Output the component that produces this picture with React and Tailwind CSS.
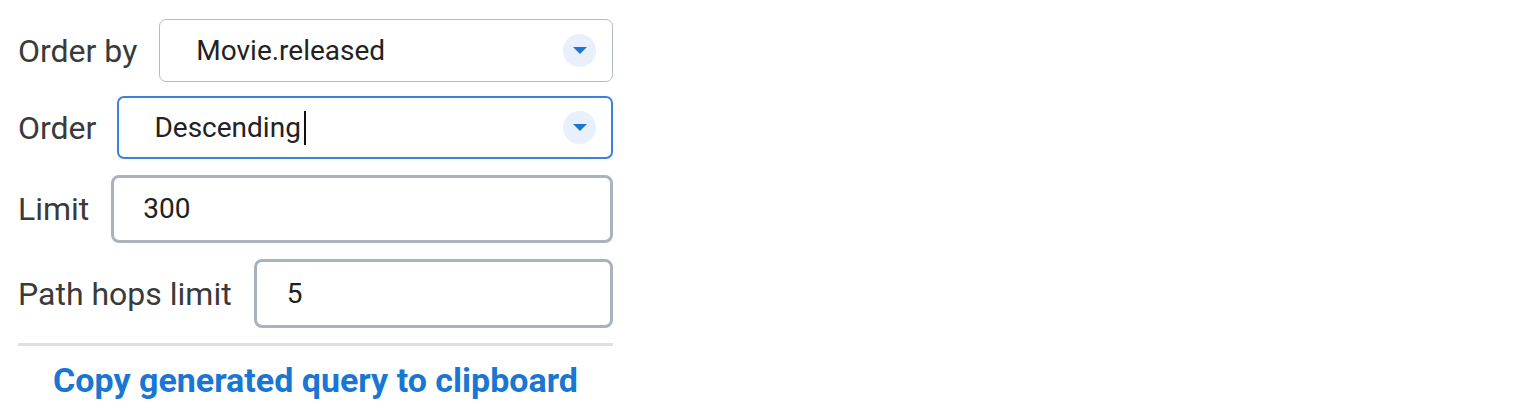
import React from "react";

function Caret() {
  return (
    <span className="flex h-[33px] w-[33px] shrink-0 items-center justify-center rounded-full bg-[#e8f0fb]">
      <svg width="14" height="7" viewBox="0 0 14 7">
        <path d="M0 0 L14 0 L7 7 Z" fill="#1976d2" />
      </svg>
    </span>
  );
}

export default function App() {
  const font = { fontFamily: "Roboto, 'Liberation Sans', sans-serif" };
  return (
    <div className="min-h-[414px] w-[1530px] bg-white" style={font}>
      <div className="flex w-[613px] flex-col pl-[18px] pt-[19px]">
        <div className="flex items-center gap-[22px]">
          <span className="text-[32px] leading-none text-[#3a3a3a]">Order by</span>
          <div className="flex h-[63px] flex-1 items-center justify-between rounded-[7px] border border-[#b4bcc6] pl-[36px] pr-[16px]">
            <span className="text-[28px] text-[#222]">Movie.released</span>
            <Caret />
          </div>
        </div>
        <div className="mt-[14px] flex items-center gap-[21px]">
          <span className="text-[32px] leading-none text-[#3a3a3a]">Order</span>
          <div className="flex h-[63px] flex-1 items-center justify-between rounded-[7px] border-2 border-[#3b82e0] pl-[35px] pr-[15px]">
            <span className="flex items-center text-[28px] text-[#222]">
              Descending
              <span className="ml-[3px] inline-block h-[34px] w-[2px] bg-[#111]" />
            </span>
            <Caret />
          </div>
        </div>
        <div className="mt-[16px] flex items-center gap-[22px]">
          <span className="text-[32px] leading-none text-[#3a3a3a]">Limit</span>
          <div className="flex h-[68px] flex-1 items-center rounded-[8px] border-[3px] border-[#a9b3be] pl-[29px]">
            <span className="text-[28px] text-[#222]">300</span>
          </div>
        </div>
        <div className="mt-[16px] flex items-center gap-[22px]">
          <span className="text-[32px] leading-none text-[#3a3a3a]">Path hops limit</span>
          <div className="flex h-[69px] flex-1 items-center rounded-[8px] border-[3px] border-[#a9b3be] pl-[30px]">
            <span className="text-[28px] text-[#222]">5</span>
          </div>
        </div>
        <div className="mt-[15px] h-[3px] w-full bg-[#e0e0e0]" />
        <div className="mt-[14px] text-center text-[34px] font-bold leading-[40px] text-[#1976d2]">
          Copy generated query to clipboard
        </div>
      </div>
    </div>
  );
}
